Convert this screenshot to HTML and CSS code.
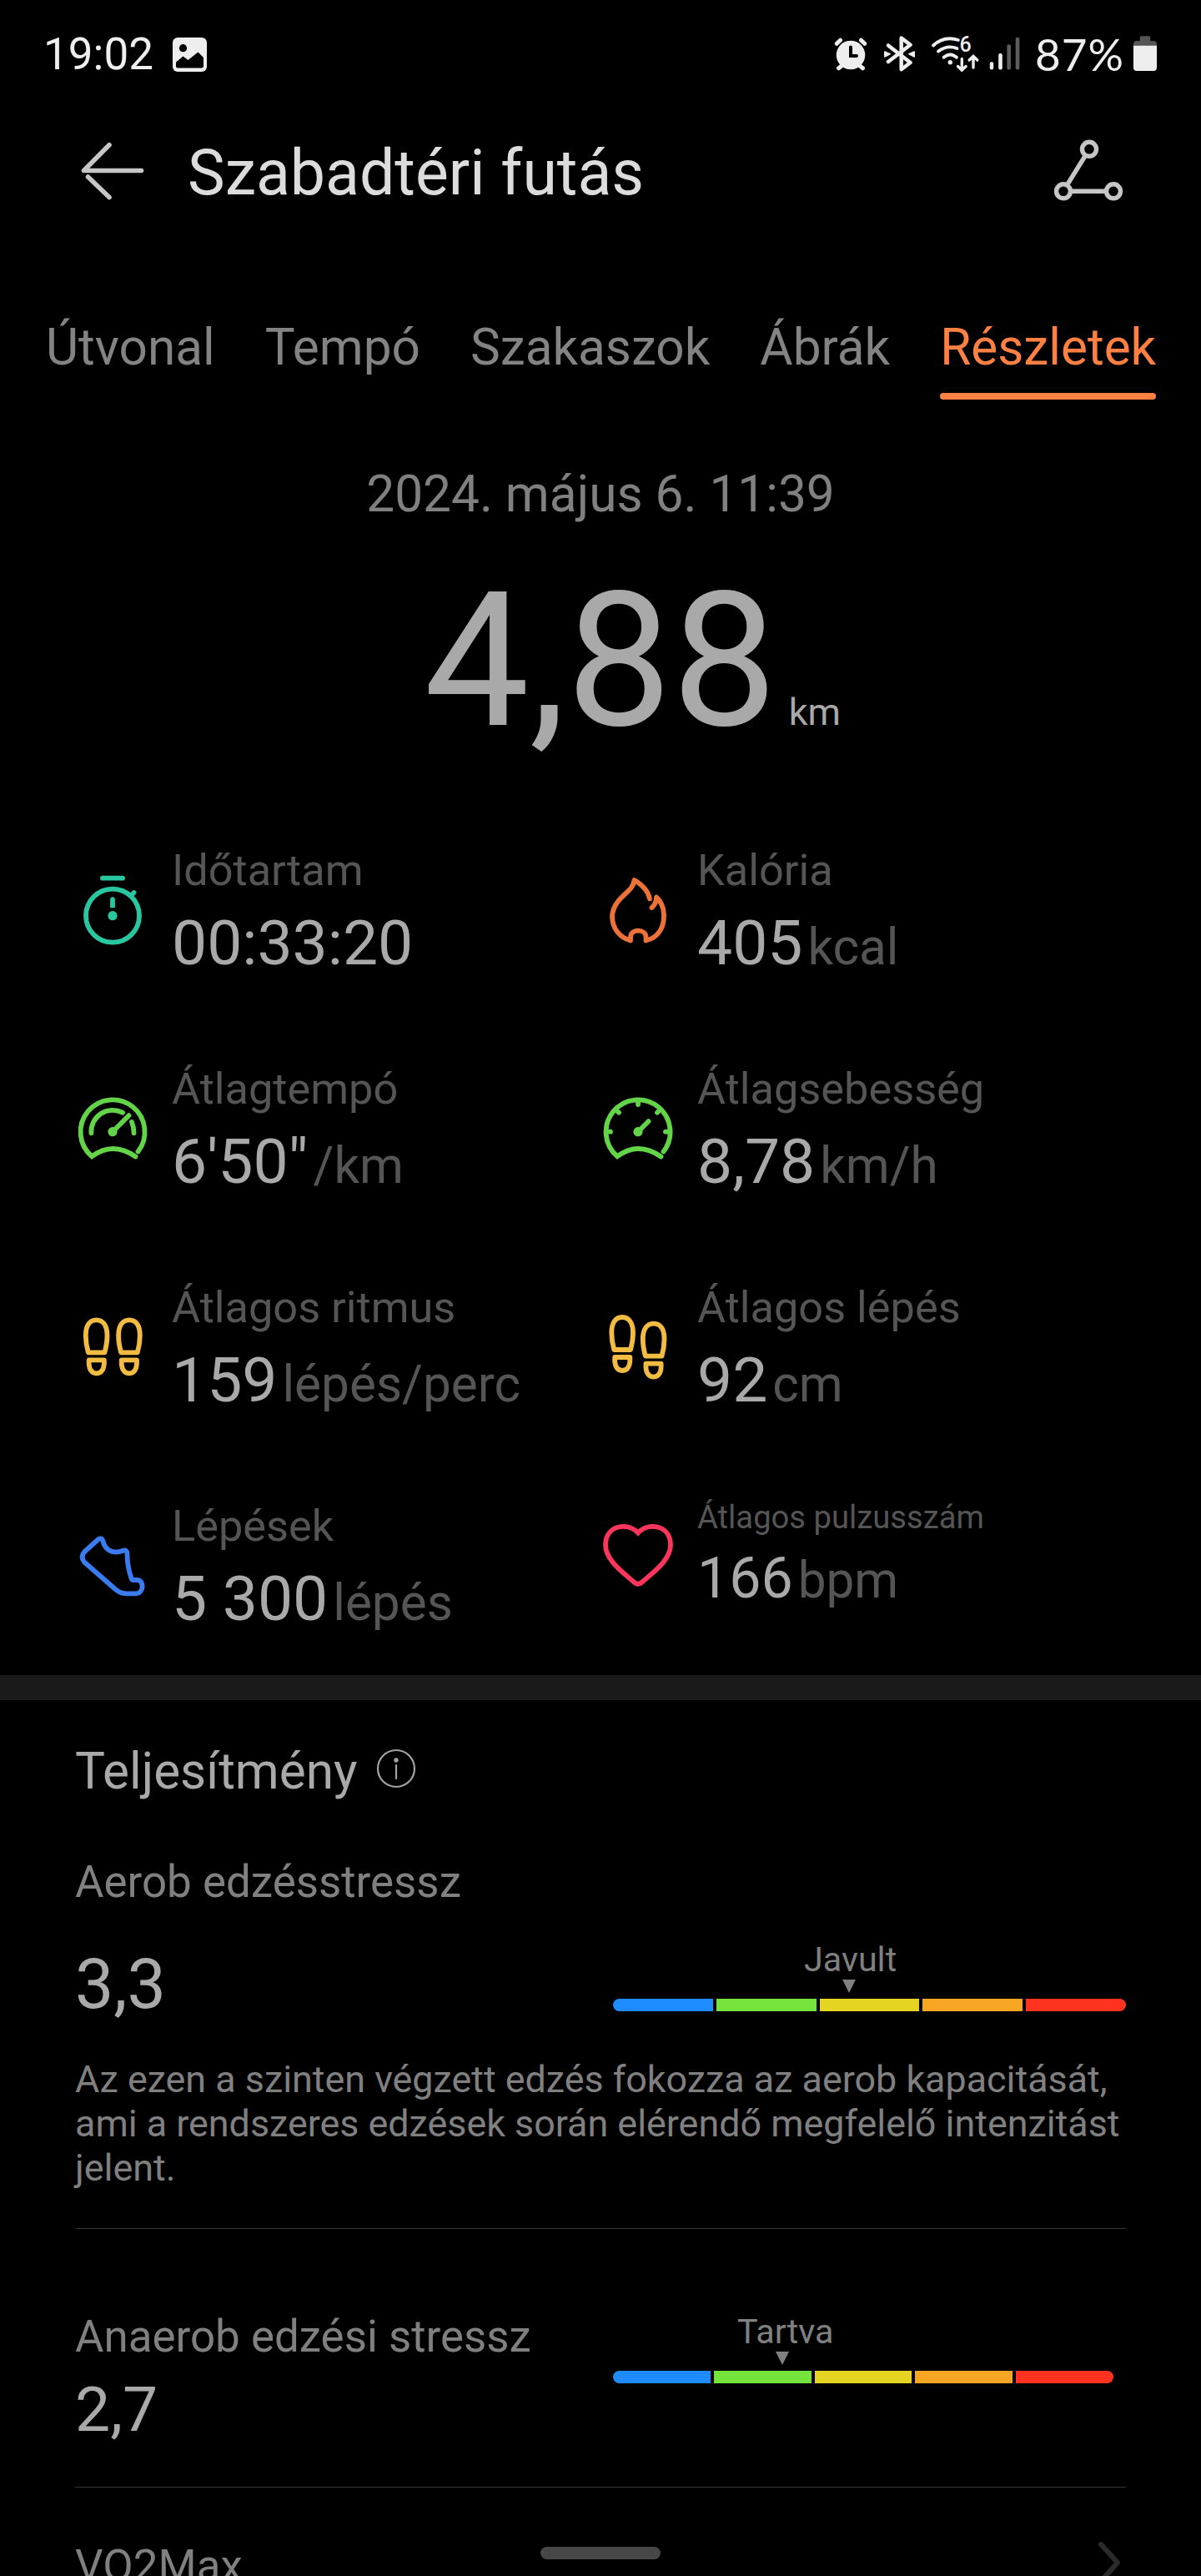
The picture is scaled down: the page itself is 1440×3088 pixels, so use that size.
FILE: index.html
```html
<!DOCTYPE html>
<html lang="hu">
<head>
    <meta charset="UTF-8">
    <meta name="viewport" content="width=device-width, initial-scale=1.0">
    <title>Szabadtéri futás</title>
    <link rel="stylesheet" href="styles.css">
</head>
<body>
    <div class="status-bar">
        <span class="clock">19:02</span>
        <svg class="status-picture" width="41" height="44" viewBox="0 0 41 44">
            <rect x="0" y="3" width="41" height="41" rx="6" fill="#eee"/>
            <circle cx="12.5" cy="15.7" r="4.6" fill="#000"/>
            <path d="M4 32.5 L12.5 25.5 L18.5 30 L30.5 20.5 L37 27 V37 Q37 39.5 34.5 39.5 H6.500 Q4 39.500 4 37 Z" fill="#000"/>
        </svg>
        <div class="status-right">
            <svg class="status-alarm" width="40" height="44" viewBox="0 0 40 44" fill="none" stroke="#eee" stroke-width="5" stroke-linecap="round">
                <circle cx="20" cy="24" r="17.300" fill="#eee" stroke="none"/>
                <path d="M3.300 10.300 L7.500 6.200 M32.500 6.200 L36.700 10.300 M9 37 L5.500 39.800 M31 37 L34.500 39.800"/>
                <path d="M20 14.500 V25 H27" stroke="#000" stroke-width="4"/>
            </svg>
            <svg class="status-bluetooth" width="37" height="44" viewBox="0 0 37 44" fill="none" stroke="#eee" stroke-width="4.500" stroke-linecap="round" stroke-linejoin="round">
                <path d="M5 12.500 L31.500 33 L20.700 41.200 V3.500 L31.500 11.800 L5 32"/>
                <path d="M0.800 20 L7 22.800 L0.800 26 Z M36.300 20 L30 22.800 L36.300 26 Z" fill="#eee" stroke-width="1.500"/>
            </svg>
            <svg class="status-wifi" width="57" height="44" viewBox="0 0 57 44" fill="none" stroke="#eee" stroke-width="3.800" stroke-linecap="round">
                <path d="M14.500 26.800 Q22.300 20.200 30 26.800 M8 19.500 Q18.500 11.500 30.500 16 M2 12.500 Q15 0.500 32 6"/>
                <circle cx="22.300" cy="32.700" r="2.700" fill="#eee" stroke="none"/>
                <path d="M36.300 28.500 V42 M31.500 37.500 L36.300 42.200 L41.100 37.500 M50 39 V25.500 M45.200 30 L50 25.300 L54.800 30" stroke-width="3.400"/>
                <text class="wifi-gen" x="33.500" y="20">6</text>
            </svg>
            <svg class="status-signal" width="37" height="44" viewBox="0 0 37 44">
                <rect x="0.800" y="32.300" width="4.400" height="9.200" rx="2" fill="#eee"/>
                <rect x="11.200" y="22" width="4.600" height="19.500" rx="2" fill="#eee"/>
                <rect x="21.400" y="11.300" width="4.600" height="30.200" rx="2" fill="#5c5c5c"/>
                <rect x="31.700" y="2.700" width="4.600" height="38.800" rx="2" fill="#5c5c5c"/>
            </svg>
            <span class="battery-level">87%</span>
            <svg class="status-battery" width="28" height="44" viewBox="0 0 28 44">
                <path d="M0 13 V11 Q0 7 4 7 H7.700 V3.300 Q7.700 1.300 9.700 1.300 H18.300 Q20.300 1.300 20.300 3.300 V7 H24 Q28 7 28 11 V13 Z" fill="#555"/>
                <path d="M0 12.700 H28 V39 Q28 43 24 43 H4 Q0 43 0 39 Z" fill="#eee"/>
            </svg>
        </div>
    </div>

    <header class="header">
        <svg width="90" height="90" viewBox="0 0 90 90" fill="none" stroke="#c6c6c6" stroke-width="5.600" stroke-linecap="round">
            <path d="M41 13.800 L10.500 44.500 H79.500" stroke-linejoin="round"/>
            <path d="M15.500 52 L41 76.500"/>
        </svg>
        <h1>Szabadtéri futás</h1>
        <svg class="share" width="90" height="90" viewBox="0 0 90 90" fill="none" stroke="#c6c6c6" stroke-width="5.400">
            <circle cx="46" cy="18.800" r="8.500"/>
            <circle cx="15" cy="69.300" r="8.500"/>
            <circle cx="75" cy="69.300" r="8.500"/>
            <path d="M41.700 26 L19.300 62 M23.500 69.300 H66.500"/>
        </svg>
    </header>

    <nav class="tabs">
        <span class="tab">Útvonal</span>
        <span class="tab">Tempó</span>
        <span class="tab">Szakaszok</span>
        <span class="tab">Ábrák</span>
        <span class="tab active">Részletek</span>
    </nav>

    <div class="date">2024. május 6. 11:39</div>
    <div class="distance">
        <span class="distance-value">4,88</span>
        <span class="distance-unit">km</span>
    </div>

    <div class="metrics">
        <div class="metric">
            <svg class="icon teal" viewBox="0 0 90 90">
                <circle cx="45" cy="51.700" r="32"/>
                <path d="M33 6.700 H57 M68 27 L70.500 24"/>
                <path d="M45 32 V42.300" stroke-linecap="butt"/>
                <circle class="dot" cx="45" cy="32" r="2.700"/>
                <circle class="dot" cx="45" cy="51.700" r="5.600"/>
            </svg>
            <div>
                <div class="label">Időtartam</div>
                <div class="value">00:33:20</div>
            </div>
        </div>
        <div class="metric">
            <svg class="icon orange" viewBox="0 0 90 90">
                <path d="M59 31.500 C57 22 49 14 40.500 9 C39.500 24 16 29 14 52 C14 67 23 78 36 81.500 V77.500 C36 67 54.500 67 54.500 77.500 V81.500 C70 78 76.500 65 76 50 C75.500 41 73 35 67 29.500 C67 35 65 39 61.500 42"/>
            </svg>
            <div>
                <div class="label">Kalória</div>
                <div class="value">405<span class="unit">kcal</span></div>
            </div>
        </div>
        <div class="metric">
            <svg class="icon green" viewBox="0 0 90 90">
                <path d="M72.500 78.500 Q45 59.500 20.200 78.300 A38.500 38.500 0 1 1 75.500 72.500" stroke-linejoin="miter"/>
                <path d="M19.400 50.300 A25.700 25.700 0 0 1 57 25.800 M68 37 Q70.500 43 70.500 50.300"/>
                <path d="M45 48.700 L64.500 29.200"/>
                <circle class="dot" cx="45" cy="48.700" r="5.600"/>
            </svg>
            <div>
                <div class="label">Átlagtempó</div>
                <div class="value">6'50"<span class="unit">/km</span></div>
            </div>
        </div>
        <div class="metric">
            <svg class="icon green" viewBox="0 0 90 90">
                <path d="M72.500 78.500 Q45 59.500 20.200 78.300 A38.500 38.500 0 1 1 75.500 72.500" stroke-linejoin="miter"/>
                <path d="M45 11 V16 M7 48.700 H12 M83 48.700 H78 M18 21.700 L22 25.700 M72 21.700 L68 25.700"/>
                <path d="M45 48.700 L57.500 36.200"/>
                <circle class="dot" cx="45" cy="48.700" r="5.600"/>
            </svg>
            <div>
                <div class="label">Átlagsebesség</div>
                <div class="value">8,78<span class="unit">km/h</span></div>
            </div>
        </div>
        <div class="metric">
            <svg class="icon yellow" viewBox="0 0 90 90">
                <g id="left-print">
                    <path d="M15.800 51.300 C14 45 12.800 38 12.800 31 C12.800 19 17.500 12.300 25.500 12.300 C33.500 12.300 38.500 19 38.500 31 C38.500 38 37.200 45 35.500 51.300 Z"/>
                    <path d="M16.700 60.300 H34.800 C35.500 70 32.500 76.300 25.700 76.300 C19 76.300 16 70 16.700 60.300 Z"/>
                </g>
                <use href="#left-print" transform="translate(90.600 0) scale(-1 1)"/>
            </svg>
            <div>
                <div class="label">Átlagos ritmus</div>
                <div class="value">159<span class="unit">lépés/perc</span></div>
            </div>
        </div>
        <div class="metric">
            <svg class="icon yellow" viewBox="0 0 90 90">
                <use href="#left-print" transform="translate(0.500 -3.300)"/>
                <use href="#left-print" transform="translate(89.300 4.300) scale(-1 1)"/>
            </svg>
            <div>
                <div class="label">Átlagos lépés</div>
                <div class="value">92<span class="unit">cm</span></div>
            </div>
        </div>
        <div class="metric">
            <svg class="icon blue" viewBox="0 0 90 90">
                <path d="M27 14 L11.500 28 Q6 34 11 40.500 L47 72 Q54 78.300 61 78.300 H73 C82.500 78.300 83.500 62 74 62 H70 Q68 62 67.500 60 C64 50 62.500 42 62.500 31 Q62.500 25 57 27 C45 31.500 36 26 33.500 15.500 Q31.500 10 27 14 Z"/>
            </svg>
            <div>
                <div class="label">Lépések</div>
                <div class="value">5 300<span class="unit">lépés</span></div>
            </div>
        </div>
        <div class="metric compact">
            <svg class="icon red" viewBox="0 0 90 90">
                <path d="M45 19.500 C33 6 6 10 6 34 C6 52 26 66 40 78.500 Q45 83 50 78.500 C64 66 84 52 84 34 C84 10 57 6 45 19.500 Z" stroke-linejoin="miter"/>
            </svg>
            <div>
                <div class="label">Átlagos pulzusszám</div>
                <div class="value">166<span class="unit">bpm</span></div>
            </div>
        </div>
    </div>

    <div class="divider"></div>

    <section class="performance">
        <h2>Teljesítmény
            <svg width="48" height="48" viewBox="0 0 48 48" fill="none" stroke="#a3a3a3" stroke-width="2.200">
                <circle cx="24" cy="24" r="22"/>
                <path d="M24 20 V36" stroke-linecap="round"/>
                <circle cx="24" cy="14" r="2.700" fill="#a3a3a3" stroke="none"/>
            </svg>
        </h2>

        <div class="stress aerob">
            <div class="stress-label">Aerob edzésstressz</div>
            <div class="stress-row">
                <div class="stress-value">3,3</div>
                <div class="gauge">
                    <div class="gauge-label">Javult</div>
                    <div class="marker"></div>
                    <div class="bar">
                        <span class="seg-blue"></span>
                        <span class="seg-green"></span>
                        <span class="seg-yellow"></span>
                        <span class="seg-orange"></span>
                        <span class="seg-red"></span>
                    </div>
                </div>
            </div>
            <p>Az ezen a szinten végzett edzés fokozza az aerob kapacitását, ami a rendszeres edzések során elérendő megfelelő intenzitást jelent.</p>
        </div>

        <div class="stress anaerob">
            <div>
                <div class="stress-label">Anaerob edzési stressz</div>
                <div class="stress-value">2,7</div>
            </div>
            <div class="gauge">
                <div class="gauge-label">Tartva</div>
                <div class="marker"></div>
                <div class="bar">
                    <span class="seg-blue"></span>
                    <span class="seg-green"></span>
                    <span class="seg-yellow"></span>
                    <span class="seg-orange"></span>
                    <span class="seg-red"></span>
                </div>
            </div>
        </div>

        <div class="vo2max">
            <div class="stress-label">VO2Max</div>
            <svg width="30" height="54" viewBox="0 0 30 54" fill="none" stroke="#2b2b2b" stroke-width="6" stroke-linecap="round" stroke-linejoin="round">
                <path d="M4 5 L24 27 L4 49"/>
            </svg>
        </div>
    </section>

    <div class="home-handle"></div>
</body>
</html>
```
FILE: styles.css
```css
* {
    box-sizing: border-box;
}

body {
    position: relative;
    width: 1440px;
    height: 3088px;
    margin: 0;
    overflow: hidden;
    background: #000;
    color: #a9a9a9;
    font-family: Roboto, sans-serif;
}

h1, h2, p {
    margin: 0;
    font-weight: 400;
}

svg {
    display: block;
    flex: none;
}

/* status bar */
.status-bar {
    display: flex;
    align-items: flex-start;
    height: 160px;
    padding: 42px 53px 0 52px;
    color: #eee;
    font-size: 53px;
    line-height: 46px;
}

.clock {
    width: 155px;
}

.status-right {
    display: flex;
    margin-left: auto;
}

.status-bluetooth {
    margin-left: 20px;
}

.status-wifi {
    margin-left: 20px;
    overflow: visible;
}

.wifi-gen {
    fill: #eee;
    stroke: none;
    font-size: 25px;
    font-weight: 500;
}

.status-signal {
    margin-left: 12px;
}

.battery-level {
    width: 118px;
    margin-left: 18px;
    font-family: Lato, sans-serif;
    letter-spacing: 1px;
}

/* header */
.header {
    display: flex;
    align-items: center;
    height: 90px;
    padding: 0 90px;
}

.header h1 {
    margin-top: 3px;
    margin-left: 45px;
    color: #dcdcdc;
    font-size: 75.2px;
    line-height: 88px;
}

.share {
    margin-left: auto;
}

/* tabs */
.tabs {
    display: flex;
    gap: 60px;
    margin-top: 132px;
    padding-left: 55px;
    color: #838383;
    font-size: 60.3px;
    line-height: 70px;
    white-space: nowrap;
}

.tab {
    height: 97px;
}

.tab.active {
    color: #ff8043;
}

.tab.active::after {
    content: "";
    display: block;
    height: 8px;
    margin-top: 19px;
    border-radius: 4px;
    background: #ff8043;
}

/* summary */
.date {
    margin-top: 79px;
    color: #808080;
    font-size: 60.4px;
    line-height: 70px;
    text-align: center;
}

.distance {
    display: grid;
    grid-template-columns: 1fr auto 1fr;
    align-items: baseline;
    margin-top: 32px;
    line-height: 264px;
}

.distance-value {
    grid-column: 2;
    font-size: 225px;
}

.distance-unit {
    padding-left: 14px;
    font-size: 45px;
    line-height: 53px;
}

/* metrics */
.metrics {
    display: grid;
    grid-template-columns: 630px 630px;
    grid-auto-rows: 162px;
    row-gap: 100px;
    margin: 88px 90px 48px;
}

.metric {
    display: flex;
    gap: 26px;
    white-space: nowrap;
}

.icon {
    width: 90px;
    height: 90px;
    margin-top: 34px;
    fill: none;
    stroke: currentColor;
    stroke-width: 5.8;
    stroke-linecap: round;
    stroke-linejoin: round;
}

.dot {
    fill: currentColor;
    stroke: none;
}

.teal { color: #29c7a0; }
.orange { color: #ec7239; }
.green { color: #63d348; }
.yellow { color: #f2bc43; }
.blue { color: #3a7cf0; }
.red { color: #fb355c; }

.label {
    color: #555;
    font-size: 52.3px;
    line-height: 62px;
}

.value {
    margin-top: 12px;
    font-size: 75px;
    line-height: 88px;
}

.unit {
    margin-left: 6px;
    color: #555;
    font-size: 60.3px;
}

.compact .icon {
    margin-top: 20px;
}

.compact .label {
    margin-top: -10px;
    font-size: 38.2px;
}

.compact .value {
    margin-top: -2px;
    font-size: 68px;
}

.divider {
    height: 30px;
    background: #1a1a1a;
}

/* performance */
.performance {
    padding: 51px 90px 0;
}

.performance h2 {
    display: flex;
    gap: 22px;
    align-items: flex-start;
    font-size: 60.3px;
    line-height: 70px;
}

.performance h2 svg {
    margin-top: 7px;
}

.stress {
    border-bottom: 1px solid #333;
}

.stress-label {
    color: #808080;
    font-size: 52.9px;
    line-height: 62px;
}

.aerob {
    height: 513px;
    padding-top: 66px;
}

.stress-row {
    display: flex;
    justify-content: space-between;
    height: 141px;
    margin-top: 38px;
}

.aerob .stress-value {
    margin-top: 6px;
    font-size: 82.5px;
    line-height: 96px;
}

.stress p {
    color: #808080;
    font-size: 44.85px;
    line-height: 53px;
}

.gauge {
    width: 615px;
    color: #808080;
}

.gauge-label {
    padding-left: 229px;
    font-size: 41.25px;
    line-height: 48px;
}

.marker {
    width: 16px;
    height: 16px;
    margin-left: 275px;
    background: #808080;
    clip-path: polygon(0 0, 100% 0, 50% 100%);
}

.bar {
    display: flex;
    gap: 4px;
    height: 15px;
    margin-top: 7px;
    border-radius: 8px;
    overflow: hidden;
}

.bar span {
    flex: 1;
}

.seg-blue { background: #1e8bff; }
.seg-green { background: #76e23c; }
.seg-yellow { background: #e6d423; }
.seg-orange { background: #f6a623; }
.seg-red { background: #ff331f; }

.anaerob {
    display: flex;
    justify-content: space-between;
    height: 310px;
    padding: 98px 15px 0 0;
}

.anaerob .stress-value {
    margin-top: 12px;
    font-size: 75px;
    line-height: 88px;
}

.anaerob .gauge {
    width: 600px;
    padding-top: 1px;
}

.anaerob .gauge-label {
    padding-left: 149px;
}

.anaerob .marker {
    margin-left: 195px;
}

.vo2max {
    display: flex;
    justify-content: space-between;
    padding: 63px 4px 0 0;
}

.home-handle {
    position: absolute;
    left: 648px;
    top: 3053px;
    width: 144px;
    height: 15px;
    border-radius: 8px;
    background: #474747;
}
```
